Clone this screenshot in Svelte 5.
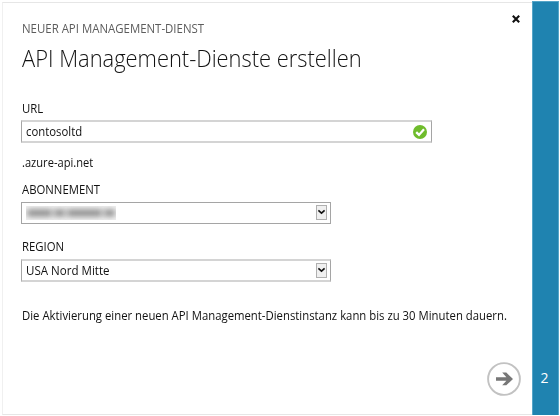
<script>
  const regions = ['USA Nord Mitte'];
</script>

{#snippet chevron()}
  <span class="drop">
    <svg width="11" height="15" viewBox="0 0 11 15">
      <rect x=".5" y=".5" width="10" height="14" fill="#f0f0f0" stroke="#b0b0b0" />
      <path d="M2.4 5.4 5.5 8.2 8.6 5.4" fill="none" stroke="#111" stroke-width="1.6" />
    </svg>
  </span>
{/snippet}

<div class="page">
  <main class="panel">
    <button class="close" aria-label="Schließen">
      <svg width="8" height="8" viewBox="0 0 8 8"><path d="M.8.8 7.2 7.2M7.2.8.8 7.2" stroke="#111" stroke-width="2.1" /></svg>
    </button>
    <div class="kicker"><span>NEUER API MANAGEMENT-DIENST</span></div>
    <h1><span>API Management-Dienste erstellen</span></h1>

    <div class="label url"><span>URL</span></div>
    <div class="field wide soft">
      <span class="v1">contosoltd</span>
      <svg class="ok" width="14" height="14" viewBox="0 0 14 14">
        <circle cx="7" cy="7" r="7" fill="#6fbc2c" />
        <path d="M3.2 7.1 6 9.9 11 4.3" fill="none" stroke="#fff" stroke-width="2.3" />
      </svg>
    </div>
    <div class="suffix"><span>.azure-api.net</span></div>

    <div class="label abo"><span>ABONNEMENT</span></div>
    <div class="field plain">
      <span class="masked"><i></i><i></i><i></i><i></i></span>
      {@render chevron()}
    </div>

    <div class="label reg"><span>REGION</span></div>
    <div class="field soft">
      <span class="v2">{regions[0]}</span>
      {@render chevron()}
    </div>

    <p><span>Die Aktivierung einer neuen API Management-Dienstinstanz kann bis zu 30 Minuten dauern.</span></p>

    <button class="next" aria-label="Weiter">
      <svg width="34" height="34" viewBox="0 0 34 34">
        <circle cx="17" cy="17" r="15.9" fill="#fff" stroke="#c2c2c2" stroke-width="1.9" />
        <path d="M9 15.3h10.4L15.2 10.6h4.1L26 17l-6.7 6.3h-4.1l4.2-4.6H9z" fill="#777" />
      </svg>
    </button>
  </main>
  <aside class="step">2</aside>
</div>

<style>
  :global(body) { background: #fff; overflow: hidden; }
  .page {
    width: 560px; height: 416px; box-sizing: border-box; padding: 1px 1px 1px 2px;
    display: flex; background: #fff; color: #111;
    font: 13px/18px "Open Sans", "Noto Sans", sans-serif;
  }
  .panel {
    position: relative; width: 530px; height: 413px; margin-top: 1px; box-sizing: border-box;
    border: 1px solid #e6e6e6; border-left-color: #f0f0f0; border-right: 0;
    padding: 17px 0 0 18px;
  }
  .step {
    width: 27px; height: 414px; box-sizing: border-box; padding-top: 366px;
    border: 1px solid #55a5c8; border-width: 1px 1px 0; background: #1f83b0;
    color: #fff; text-align: center; font-size: 14px; line-height: 20px; text-indent: -2px;
  }
  span { display: inline-block; transform: scaleX(.907); transform-origin: 0 50%; white-space: nowrap; }
  .kicker { height: 18px; padding-left: 1px; color: #5c5c5c; font-size: 12.5px; }
  .kicker span { transform: scaleX(.914); }
  h1 { margin: 4px 0 0; padding-left: 1px; height: 32px; font-size: 24px; line-height: 32px; font-weight: 300; color: #111; }
  h1 span { transform: scaleX(.912); }
  .label, .suffix { height: 18px; padding-left: 1px; font-size: 12.5px; }
  .url { margin: 26px 0 2px; }
  .suffix { margin-top: 11px; }
  .suffix span { transform: scaleX(.889); }
  .abo { margin: 9px 0 3px; }
  .reg { margin: 14px 0 3px; }
  .field {
    width: 310px; height: 22px; box-sizing: border-box; border: 1px solid #a5a5a5;
    padding: 0 3px 0 4px; display: flex; align-items: center; justify-content: space-between;
    background: #fff; font-size: 12.5px;
  }
  .plain { padding-bottom: 1px; }
  .soft { height: 23px; border-top: 2px solid #d4d4d4; border-bottom: 2px solid #d4d4d4; }
  .wide { width: 411px; padding-right: 4px; }
  .v2 { transform: scaleX(.925); }
  .drop { height: 15px; line-height: 0; transform: none; }
  .masked {
    display: flex; align-items: center; width: 90px; height: 14px; margin-top: 1px;
    background: #f4f4f4; overflow: hidden; transform: none;
  }
  .masked i { height: 6px; background: #777; filter: blur(3px); flex: 25; margin: 0 1px; }
  .masked i:nth-child(2) { flex: 11; }
  .masked i:nth-child(3) { flex: 34; }
  .masked i:nth-child(4) { flex: 11; }
  p { margin: 25px 0 0; padding-left: 1px; height: 18px; font-size: 12.5px; }
  button { border: 0; padding: 0; background: none; line-height: 0; }
  .close { position: absolute; left: 509px; top: 12px; }
  .next { position: absolute; left: 484px; top: 359px; }
</style>
